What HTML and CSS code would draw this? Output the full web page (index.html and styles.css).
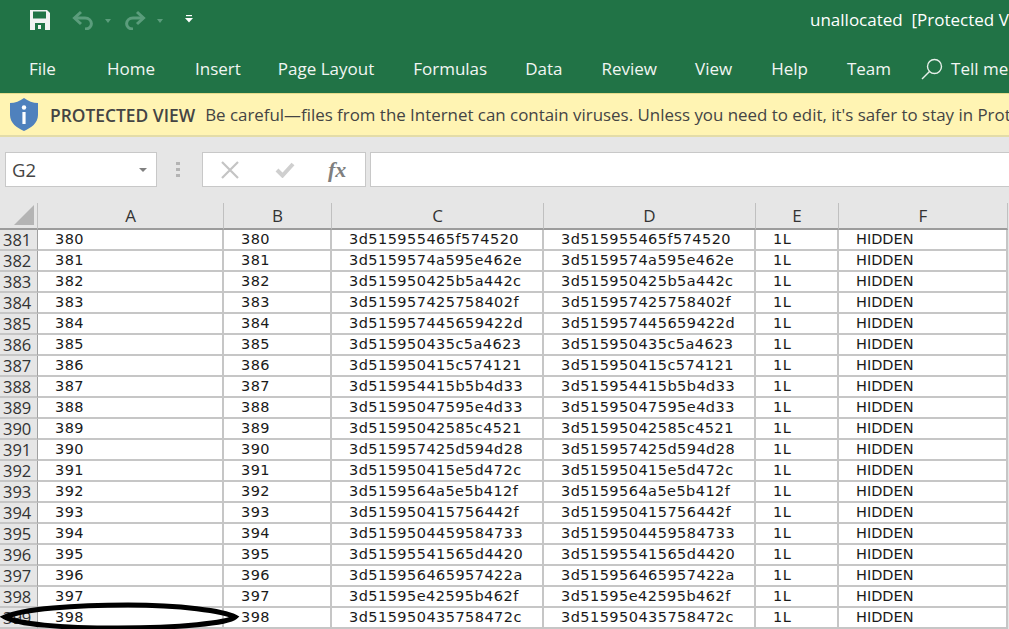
FILE: index.html
```html
<!DOCTYPE html>
<html lang="en">
<head>
  <meta charset="UTF-8" />
  <title>unallocated [Protected View]</title>
  <link rel="stylesheet" href="styles.css">
</head>
<body>
  <header class="ribbon">
    <div class="title-bar">
      <svg class="qa-save" width="20" height="20" viewBox="0 0 20 20">
        <path d="M0 0H17L20 3V20H0Z" fill="#f2f2f2"/>
        <path d="M3 1.500H16V8.500H3Z" fill="#217346"/>
        <path d="M5 13H15V20H5Z" fill="#217346"/>
        <path d="M8 15H11V19H8Z" fill="#f2f2f2"/>
      </svg>
      <svg class="qa-undo" width="22" height="20" viewBox="0 0 22 20" fill="none" stroke="#5b9d7c" stroke-width="3">
        <path d="M9 2L2.500 8L9 14"/>
        <path d="M3 8H13C21 8 22 19 13 19"/>
      </svg>
      <span class="qa-caret"></span>
      <svg class="qa-redo" width="22" height="20" viewBox="0 0 22 20" fill="none" stroke="#5b9d7c" stroke-width="3">
        <path d="M13 2L19.500 8L13 14"/>
        <path d="M19 8H9C1 8 0 19 9 19"/>
      </svg>
      <span class="qa-caret"></span>
      <svg class="qa-more" width="8" height="8" viewBox="0 0 8 8" fill="#fff">
        <path d="M1 0H7V1.200H1Z"/>
        <path d="M0 3H8L4 7.500Z"/>
      </svg>
      <div class="doc-title">unallocated&nbsp;&nbsp;[Protected View] - Excel</div>
    </div>
    <nav class="tabs">
      <span class="tab tab-file">File</span>
      <span class="tab tab-home">Home</span>
      <span class="tab tab-insert">Insert</span>
      <span class="tab tab-layout">Page Layout</span>
      <span class="tab tab-formulas">Formulas</span>
      <span class="tab tab-data">Data</span>
      <span class="tab tab-review">Review</span>
      <span class="tab tab-view">View</span>
      <span class="tab tab-help">Help</span>
      <span class="tab tab-team">Team</span>
      <svg class="search-icon" width="22" height="22" viewBox="0 0 22 22" fill="none" stroke="#e6efe9" stroke-width="1.400">
        <circle cx="13.500" cy="8.500" r="7"/>
        <path d="M8.500 13.500L1 21"/>
      </svg>
      <span class="tab tab-tell">Tell me what you want to do</span>
    </nav>
  </header>

  <div class="message-bar">
    <svg class="shield" width="28" height="33" viewBox="0 0 28 33">
      <path d="M14 0C18 3 23 5 28 5V17C28 25 21 30 14 33C7 30 0 25 0 17V5C5 5 10 3 14 0Z" fill="#4f81bd"/>
      <circle cx="14" cy="9.500" r="2.200" fill="#fff"/>
      <path d="M12.400 14H15.600V26H12.400Z" fill="#fff"/>
    </svg>
    <strong class="message-label">PROTECTED VIEW</strong>
    <span class="message-text">Be careful—files from the Internet can contain viruses. Unless you need to edit, it's safer to stay in Protected View.</span>
  </div>

  <div class="formula-bar">
    <div class="name-box">
      <span>G2</span>
      <i class="name-caret"></i>
    </div>
    <div class="grip"><i></i><i></i><i></i></div>
    <div class="fx-box">
      <svg class="fx-cancel" width="18" height="18" viewBox="0 0 18 18" stroke="#c4c4c4" stroke-width="2.200"><path d="M1 1L17 17M17 1L1 17"/></svg>
      <svg class="fx-ok" width="20" height="16" viewBox="0 0 20 16" fill="none" stroke="#cfcfcf" stroke-width="4"><path d="M2 8L7.500 13.500L18 2"/></svg>
      <span class="fx-label">fx</span>
    </div>
    <div class="formula-input"></div>
  </div>

  <table class="sheet">
    <colgroup>
      <col class="col-head"><col class="col-a"><col class="col-b"><col class="col-c"><col class="col-d"><col class="col-e"><col class="col-f">
    </colgroup>
    <thead>
      <tr>
        <th class="corner"><i></i></th>
        <th>A</th><th>B</th><th>C</th><th>D</th><th>E</th><th>F</th>
      </tr>
    </thead>
    <tbody>
      <tr><th>381</th><td>380</td><td>380</td><td>3d515955465f574520</td><td>3d515955465f574520</td><td>1L</td><td>HIDDEN</td></tr>
      <tr><th>382</th><td>381</td><td>381</td><td>3d5159574a595e462e</td><td>3d5159574a595e462e</td><td>1L</td><td>HIDDEN</td></tr>
      <tr><th>383</th><td>382</td><td>382</td><td>3d515950425b5a442c</td><td>3d515950425b5a442c</td><td>1L</td><td>HIDDEN</td></tr>
      <tr><th>384</th><td>383</td><td>383</td><td>3d515957425758402f</td><td>3d515957425758402f</td><td>1L</td><td>HIDDEN</td></tr>
      <tr><th>385</th><td>384</td><td>384</td><td>3d515957445659422d</td><td>3d515957445659422d</td><td>1L</td><td>HIDDEN</td></tr>
      <tr><th>386</th><td>385</td><td>385</td><td>3d515950435c5a4623</td><td>3d515950435c5a4623</td><td>1L</td><td>HIDDEN</td></tr>
      <tr><th>387</th><td>386</td><td>386</td><td>3d515950415c574121</td><td>3d515950415c574121</td><td>1L</td><td>HIDDEN</td></tr>
      <tr><th>388</th><td>387</td><td>387</td><td>3d515954415b5b4d33</td><td>3d515954415b5b4d33</td><td>1L</td><td>HIDDEN</td></tr>
      <tr><th>389</th><td>388</td><td>388</td><td>3d51595047595e4d33</td><td>3d51595047595e4d33</td><td>1L</td><td>HIDDEN</td></tr>
      <tr><th>390</th><td>389</td><td>389</td><td>3d51595042585c4521</td><td>3d51595042585c4521</td><td>1L</td><td>HIDDEN</td></tr>
      <tr><th>391</th><td>390</td><td>390</td><td>3d515957425d594d28</td><td>3d515957425d594d28</td><td>1L</td><td>HIDDEN</td></tr>
      <tr><th>392</th><td>391</td><td>391</td><td>3d515950415e5d472c</td><td>3d515950415e5d472c</td><td>1L</td><td>HIDDEN</td></tr>
      <tr><th>393</th><td>392</td><td>392</td><td>3d5159564a5e5b412f</td><td>3d5159564a5e5b412f</td><td>1L</td><td>HIDDEN</td></tr>
      <tr><th>394</th><td>393</td><td>393</td><td>3d515950415756442f</td><td>3d515950415756442f</td><td>1L</td><td>HIDDEN</td></tr>
      <tr><th>395</th><td>394</td><td>394</td><td>3d5159504459584733</td><td>3d5159504459584733</td><td>1L</td><td>HIDDEN</td></tr>
      <tr><th>396</th><td>395</td><td>395</td><td>3d51595541565d4420</td><td>3d51595541565d4420</td><td>1L</td><td>HIDDEN</td></tr>
      <tr><th>397</th><td>396</td><td>396</td><td>3d515956465957422a</td><td>3d515956465957422a</td><td>1L</td><td>HIDDEN</td></tr>
      <tr><th>398</th><td>397</td><td>397</td><td>3d51595e42595b462f</td><td>3d51595e42595b462f</td><td>1L</td><td>HIDDEN</td></tr>
      <tr><th>399</th><td>398</td><td>398</td><td>3d515950435758472c</td><td>3d515950435758472c</td><td>1L</td><td>HIDDEN</td></tr>
    </tbody>
  </table>

  <svg class="circle-mark" width="240" height="30" viewBox="0 0 240 30" fill="none" stroke="#000" stroke-width="5">
    <path d="M5 15C22 7 75 3 128 3C180 3 224 9 235 15C228 21 180 26 118 26C60 26 17 22 5 15Z"/>
  </svg>
</body>
</html>
```

FILE: styles.css
```css
* {
  box-sizing: border-box;
}

html, body {
  height: 629px;
}

body {
  position: relative;
  margin: 0;
  overflow: hidden;
  background: #e6e6e6;
  font-family: "Open Sans", sans-serif;
}

svg {
  flex: none;
}

/* ribbon */
.ribbon {
  height: 93px;
  background: #217346;
  color: #fff;
  overflow: hidden;
}

.title-bar {
  display: flex;
  align-items: center;
  height: 40px;
  padding-left: 30px;
  white-space: nowrap;
}

.qa-save {
  margin-right: 22px;
}

.qa-caret {
  flex: none;
  width: 0;
  height: 0;
  margin: 2px 13px 0 11px;
  border: 3.5px solid transparent;
  border-top: 4px solid #5b9d7c;
  border-bottom: 0;
}

.qa-more {
  margin-left: 9px;
  margin-top: -2px;
}

.doc-title {
  margin-left: 617px;
  font-size: 17px;
  line-height: 38px;
}

.tabs {
  display: flex;
  align-items: center;
  height: 53px;
  padding-top: 4px;
  white-space: nowrap;
  font-size: 17px;
  color: #f1f6f3;
}

.tab-file { margin-left: 29px; }
.tab-home { margin-left: 51px; }
.tab-insert { margin-left: 40px; }
.tab-layout { margin-left: 37px; }
.tab-formulas { margin-left: 39px; }
.tab-data { margin-left: 38px; }
.tab-review { margin-left: 39px; }
.tab-view { margin-left: 38px; }
.tab-help { margin-left: 39px; }
.tab-team { margin-left: 39px; }
.tab-tell { margin-left: 8px; }

.search-icon {
  margin-left: 30px;
}

/* protected view */
.message-bar {
  display: flex;
  align-items: center;
  height: 44px;
  padding-left: 10px;
  overflow: hidden;
  background: #fff4b3;
  border-top: 1px solid #e6dc8c;
  border-bottom: 2px solid #e3dca8;
  color: #444;
  font-size: 16.9px;
  white-space: nowrap;
}

.shield {
  margin-right: 12px;
}

.message-label {
  margin-right: 10px;
  font-size: 17.4px;
  font-weight: 600;
}

/* formula bar */
.formula-bar {
  display: flex;
  height: 35px;
  margin-top: 15px;
  padding-left: 5px;
}

.name-box {
  display: flex;
  align-items: center;
  justify-content: space-between;
  width: 152px;
  padding: 0 9px 0 6px;
  background: #fff;
  border: 1px solid #c8c8c8;
  color: #444;
  font-size: 18.5px;
}

.name-caret {
  width: 0;
  height: 0;
  border: 4px solid transparent;
  border-top: 4px solid #808080;
  border-bottom: 0;
}

.grip {
  display: flex;
  flex-direction: column;
  justify-content: center;
  gap: 3px;
  width: 45px;
  padding-left: 19px;
}

.grip i {
  width: 4px;
  height: 3px;
  background: #b4b4b4;
}

.fx-box {
  display: flex;
  align-items: center;
  width: 164px;
  padding-left: 18px;
  background: #fff;
  border: 1px solid #c8c8c8;
}

.fx-ok {
  margin-left: 36px;
}

.fx-label {
  margin-left: 33px;
  font-family: "Liberation Serif", serif;
  font-size: 22px;
  font-style: italic;
  font-weight: 700;
  color: #7f7f7f;
}

.formula-input {
  flex: 1;
  margin-left: 4px;
  background: #fff;
  border: 1px solid #c8c8c8;
  border-right: 0;
}

/* sheet */
.sheet {
  width: 1008px;
  margin-top: 16px;
  table-layout: fixed;
  border-collapse: separate;
  border-spacing: 0;
  background: #fff;
}

.col-head { width: 38px; }
.col-a { width: 186px; }
.col-b { width: 108px; }
.col-c { width: 212px; }
.col-d { width: 212px; }
.col-e { width: 83px; }
.col-f { width: 169px; }

thead th {
  height: 27px;
  padding: 0;
  background: #e6e6e6;
  border-right: 1px solid #c0c0c0;
  border-bottom: 2px solid #9c9c9c;
  font-size: 17px;
  font-weight: 400;
  color: #333;
}

.corner {
  position: relative;
}

.corner i {
  position: absolute;
  right: 3px;
  bottom: 3px;
  width: 20px;
  height: 20px;
  background: #b4b4b4;
  clip-path: polygon(100% 0, 100% 100%, 0 100%);
}

tbody th {
  height: 21px;
  padding: 0 0 0 3px;
  background: #e6e6e6;
  border-right: 1px solid #a0a0a0;
  border-bottom: 2px solid #c6c6c6;
  font-size: 16.5px;
  font-weight: 400;
  line-height: 19px;
  text-align: left;
  color: #333;
}

tbody td {
  height: 21px;
  padding: 0 0 0 17px;
  border-right: 2px solid #c6c6c6;
  border-bottom: 2px solid #c6c6c6;
  font-family: "DejaVu Sans", sans-serif;
  font-size: 14.5px;
  letter-spacing: 0.45px;
  line-height: 19px;
  color: #1a1a1a;
  white-space: nowrap;
  overflow: hidden;
}

tbody td:last-child {
  letter-spacing: 0;
}

/* hand drawn circle round the last row */
.circle-mark {
  position: absolute;
  left: 0;
  top: 602px;
}
```
